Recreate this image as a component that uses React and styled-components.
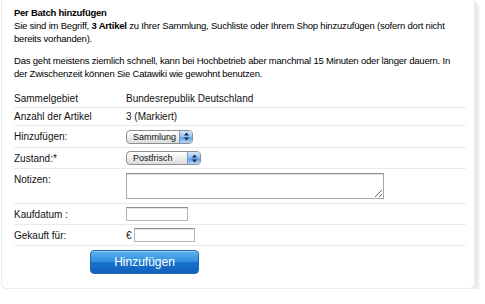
import React from "react";
import styled, { createGlobalStyle } from "styled-components";

const GlobalStyle = createGlobalStyle`
  body {
    margin: 0;
    background: #ffffff;
    font-family: "Liberation Sans", Arial, sans-serif;
    color: #111;
  }
`;

const Card = styled.div`
  width: 474px;
  height: 289px;
  margin-left: 1px;
  background: #fff;
  border: 1px solid #ececec;
  border-top: none;
  border-radius: 0 0 6px 6px;
  box-shadow: 3px 3px 0 #ebebeb, 5px 5px 0 #f5f5f5;
  padding: 6px 11px 0 12px;
  box-sizing: border-box;
  font-size: 10px;
`;

const Title = styled.h3`
  margin: 0;
  font-size: 9.5px;
  font-weight: bold;
  letter-spacing: -0.25px;
  line-height: 13px;
  color: #000;
`;

const Para = styled.p`
  margin: 0 0 9px;
  line-height: 13px;
  font-size: 9.5px;
  letter-spacing: -0.2px;
  color: #000;
`;

const Table = styled.div`
  margin-top: 10px;
  width: 452px;
  display: flex;
  flex-direction: column;
`;

const Row = styled.div`
  display: grid;
  grid-template-columns: 112px 1fr;
  align-items: ${(p) => (p.$top ? "start" : "center")};
  min-height: ${(p) => p.$h || 18}px;
  border-bottom: 1px solid #ede9e9;
  box-sizing: border-box;
  padding-top: ${(p) => (p.$top ? 4 : 0)}px;
  font-size: 10px;
`;

const Label = styled.span`
  line-height: 13px;
`;

const Value = styled.div`
  display: flex;
  align-items: center;
  line-height: 13px;
`;

const SelectWrap = styled.div`
  position: relative;
  width: ${(p) => p.$w}px;
  height: 14px;
`;

const Select = styled.select`
  appearance: none;
  -webkit-appearance: none;
  width: 100%;
  height: 14px;
  margin: 0;
  padding: 0 14px 0 6px;
  border: 1px solid #8f8f8f;
  border-radius: 4px;
  background: linear-gradient(#ffffff, #ececec 55%, #dcdcdc);
  font-family: "Liberation Sans", Arial, sans-serif;
  font-size: 9px;
  color: #111;
  box-sizing: border-box;
  line-height: 12px;
  outline: none;
`;

const Cap = styled.span`
  position: absolute;
  top: 1px;
  right: 1px;
  width: 12px;
  height: 12px;
  border-left: 1px solid #7d98bd;
  border-radius: 0 3px 3px 0;
  background: linear-gradient(#d6e8fb, #8fbdf0 50%, #5f9de6 55%, #b6d6f7);
  display: flex;
  align-items: center;
  justify-content: center;
  pointer-events: none;
`;

const TextArea = styled.textarea`
  width: 258px;
  height: 26px;
  margin: 0;
  border: 1px solid #a8a8a8;
  border-top-color: #8a8a8a;
  box-sizing: border-box;
  resize: both;
  font-family: "Liberation Sans", Arial, sans-serif;
  font-size: 10px;
  padding: 2px;
  box-shadow: inset 0 1px 1px #e0e0e0;
`;

const Input = styled.input`
  width: ${(p) => p.$w}px;
  height: 14px;
  margin: 0;
  padding: 0 2px;
  border: 1px solid #b5b5b5;
  border-top-color: #8e8e8e;
  box-sizing: border-box;
  box-shadow: inset 0 1px 1px #e4e4e4;
  outline: none;
`;

const Euro = styled.span`
  font-size: 10px;
  margin-right: 2px;
`;

const ButtonRow = styled.div`
  padding: 4px 0 0 76px;
`;

const Button = styled.button`
  width: 109px;
  height: 24px;
  border: 1px solid #1f65b3;
  border-radius: 4px;
  background: linear-gradient(#5db4ee, #2f8fdc 50%, #1673cf 52%, #1560b8);
  color: #fff;
  font-family: "Liberation Sans", Arial, sans-serif;
  font-size: 12px;
  cursor: pointer;
  box-shadow: inset 0 1px 0 rgba(255, 255, 255, 0.35);
  padding: 0;
`;

const Arrows = () => (
  <svg width="7" height="9" viewBox="0 0 7 9">
    <path d="M3.5 0.5 L6 3.5 H1 Z" fill="#1a2a40" />
    <path d="M3.5 8.5 L6 5.5 H1 Z" fill="#1a2a40" />
  </svg>
);

const Dropdown = ({ width, options }) => (
  <SelectWrap $w={width}>
    <Select defaultValue={options[0]}>
      {options.map((o) => (
        <option key={o}>{o}</option>
      ))}
    </Select>
    <Cap>
      <Arrows />
    </Cap>
  </SelectWrap>
);

export default function App() {
  return (
    <>
      <GlobalStyle />
      <Card>
        <Title>Per Batch hinzufügen</Title>
        <Para>
          Sie sind im Begriff, <b>3 Artikel</b> zu Ihrer Sammlung, Suchliste
          oder Ihrem Shop hinzuzufügen (sofern dort nicht bereits vorhanden).
        </Para>
        <Para>
          Das geht meistens ziemlich schnell, kann bei Hochbetrieb aber manchmal
          15 Minuten oder länger dauern. In der Zwischenzeit können Sie Catawiki
          wie gewohnt benutzen.
        </Para>
        <Table>
          <Row $h={18}>
            <Label>Sammelgebiet</Label>
            <Value>Bundesrepublik Deutschland</Value>
          </Row>
          <Row $h={18}>
            <Label>Anzahl der Artikel</Label>
            <Value>3 (Markiert)</Value>
          </Row>
          <Row $h={22}>
            <Label>Hinzufügen:</Label>
            <Value>
              <Dropdown width={67} options={["Sammlung", "Suchliste", "Shop"]} />
            </Value>
          </Row>
          <Row $h={21}>
            <Label>Zustand:*</Label>
            <Value>
              <Dropdown width={75} options={["Postfrisch", "Gestempelt", "Ungebraucht"]} />
            </Value>
          </Row>
          <Row $h={35} $top>
            <Label>Notizen:</Label>
            <Value>
              <TextArea />
            </Value>
          </Row>
          <Row $h={21}>
            <Label>Kaufdatum :</Label>
            <Value>
              <Input $w={62} />
            </Value>
          </Row>
          <Row $h={21}>
            <Label>Gekauft für:</Label>
            <Value>
              <Euro>€</Euro>
              <Input $w={61} />
            </Value>
          </Row>
        </Table>
        <ButtonRow>
          <Button>Hinzufügen</Button>
        </ButtonRow>
      </Card>
    </>
  );
}
